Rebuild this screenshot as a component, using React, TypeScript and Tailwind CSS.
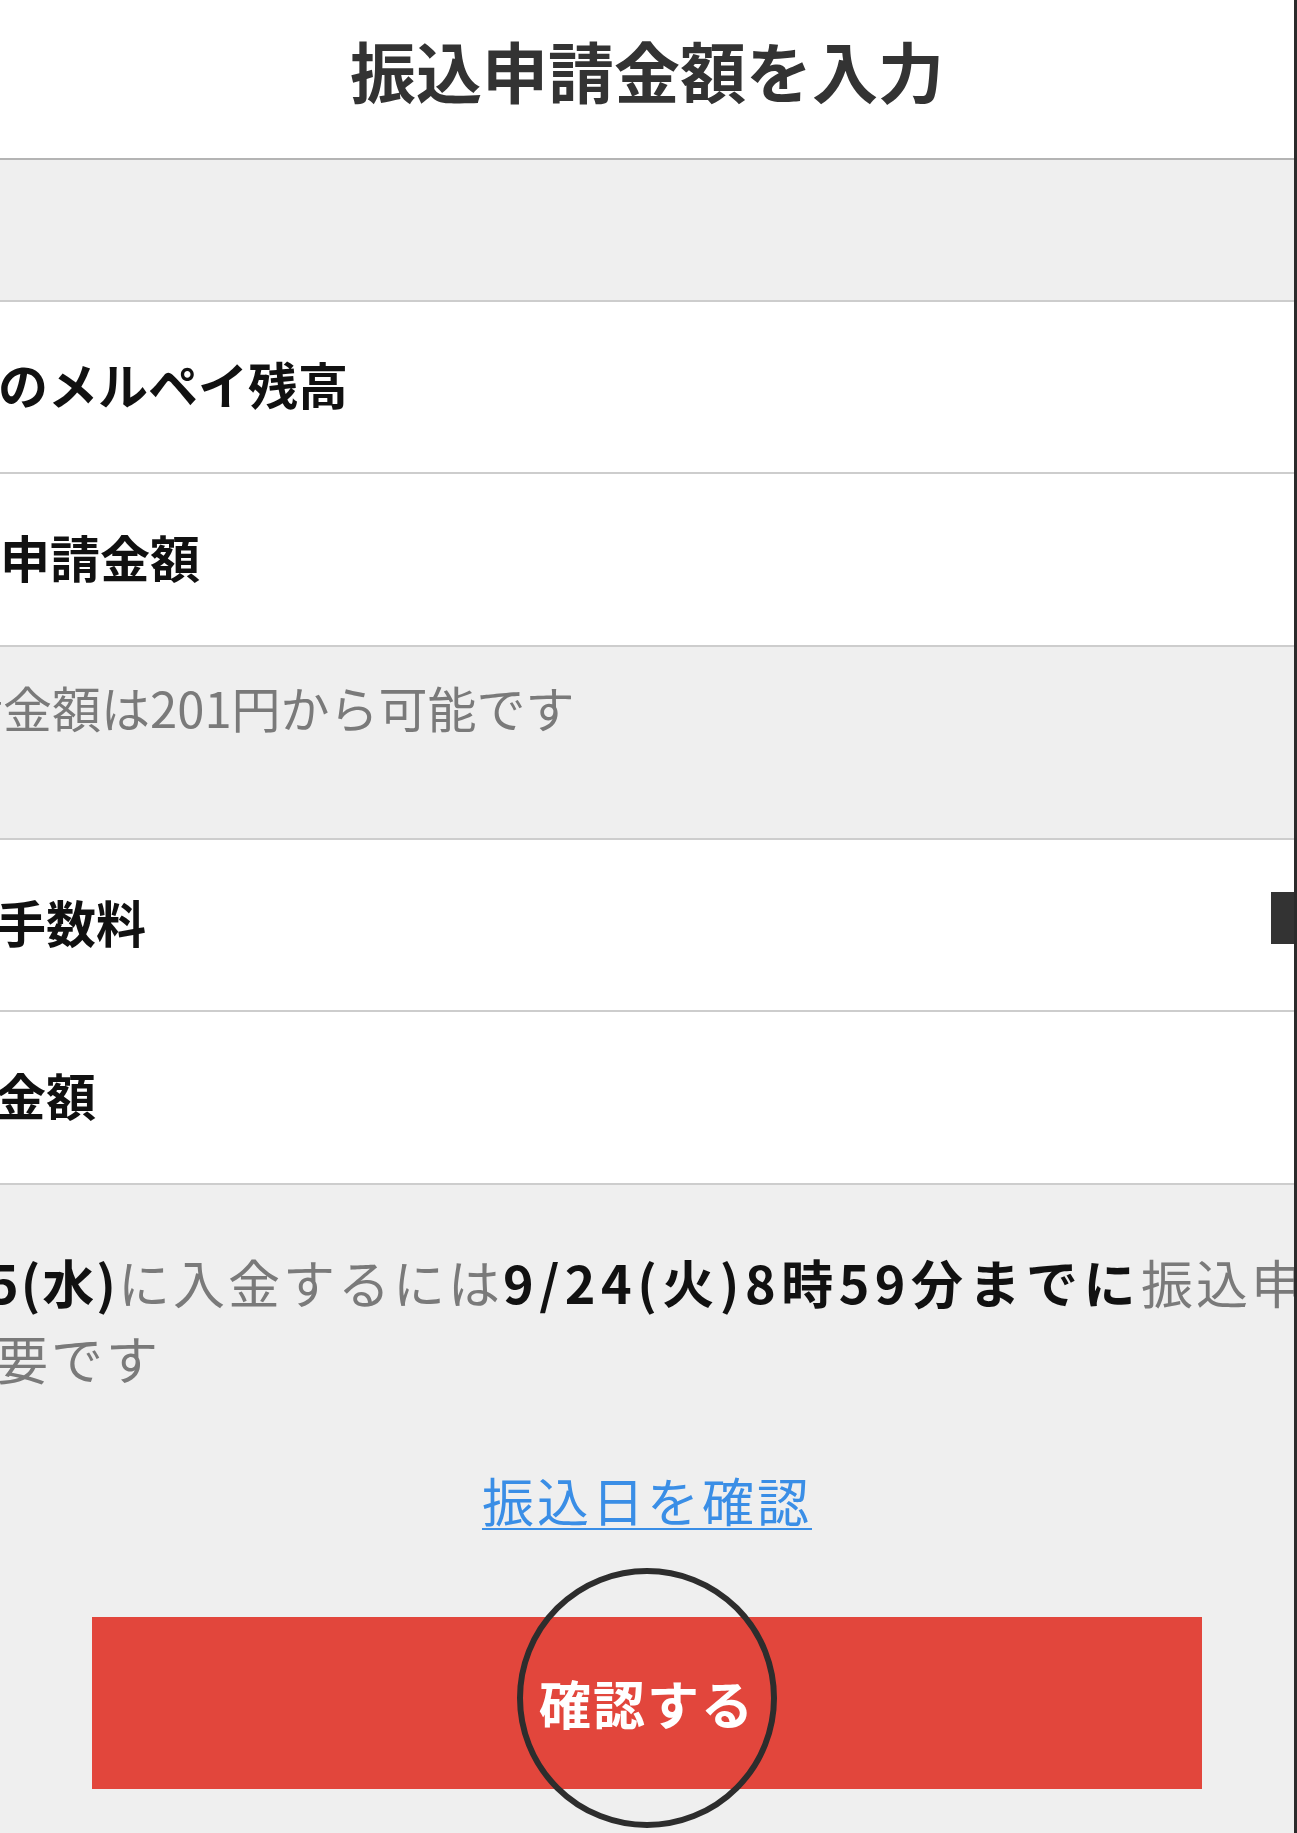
import React from 'react';

// Transfer amount entry screen (cropped / zoomed view)
function Row({
  label,
  offset = 'ml-0',
  children,
  className = '',
}: {
  label: string;
  offset?: string;
  children?: React.ReactNode;
  className?: string;
}) {
  return (
    <div className={`flex items-center justify-between bg-white border-t-2 border-[#cdcdcd] ${className}`}>
      <span className={`whitespace-nowrap text-[50px] font-bold leading-none text-[#111] pb-[8px] ${offset}`}>{label}</span>
      {children}
    </div>
  );
}

export default function App() {
  return (
    <div className="w-[1297px] min-h-[1833px] overflow-hidden bg-[#efefef] border-r-[3px] border-[#2b2b2b] font-['Noto_Sans_CJK_JP','Noto_Sans',sans-serif]">
      {/* Header */}
      <header className="h-[160px] bg-white border-b-2 border-[#b4b4b4] flex items-center justify-center pb-[20px]">
        <h1 className="text-[66px] font-bold leading-none text-[#333]">振込申請金額を入力</h1>
      </header>

      <div className="h-[140px]" />

      <Row label="のメルペイ残高" offset="ml-[-2px]" className="h-[172px]" />
      <Row label="申請金額" className="h-[173px]" />

      {/* Minimum amount note */}
      <div className="h-[193px] border-t-2 border-[#cdcdcd] pt-[30px]">
        <p className="ml-[-46px] whitespace-nowrap text-[49px] leading-[60px] text-[#7a7a7a]">
          請金額は201円から可能です
        </p>
      </div>

      <Row label="手数料" offset="ml-[-4px]" className="h-[172px]">
        <div className="w-[23px] h-[52px] bg-[#333] mb-[14px]" />
      </Row>
      <Row label="金額" offset="ml-[-4px]" className="h-[175px] border-b-2" />

      {/* Deadline notice */}
      <div className="pt-[59px] text-[52px] leading-[76px] whitespace-nowrap">
        <p className="ml-[-12px]">
          <span className="font-bold tracking-[2px] text-[#111]">5(水)</span>
          <span className="tracking-[3px] text-[#7a7a7a]">に入金するには</span>
          <span className="font-bold tracking-[5.5px] text-[#111]">9/24(火)8時59分までに</span>
          <span className="tracking-[3px] text-[#7a7a7a]">振込申請が</span>
        </p>
        <p className="ml-[-4px] tracking-[3px] text-[#7a7a7a]">要です</p>
      </div>

      <div className="mt-[66px] flex justify-center">
        <a className="text-[52px] leading-[76px] tracking-[3px] text-[#3a8ee6] underline decoration-2 underline-offset-[6px]">
          振込日を確認
        </a>
      </div>

      {/* Confirm button with highlight circle */}
      <div className="mt-[79px] pb-[41px]">
        <div className="relative mx-[92px] h-[172px] bg-[#e2463c] flex items-center justify-center">
          <span className="text-[52px] font-bold leading-none tracking-[2px] text-white">確認する</span>
          <div className="absolute left-1/2 top-[-49px] -translate-x-1/2 w-[260px] h-[260px] rounded-full border-[6px] border-[#2d2d2d]" />
        </div>
      </div>
    </div>
  );
}
